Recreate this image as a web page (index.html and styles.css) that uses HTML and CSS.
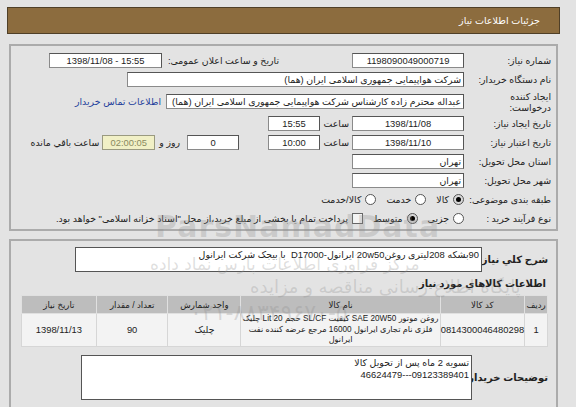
FILE: index.html
```html
<!DOCTYPE html>
<html lang="fa" dir="rtl">
<head>
<meta charset="utf-8">
<title>جزئیات اطلاعات نیاز</title>
<link rel="stylesheet" href="styles.css">
</head>
<body>
<div class="page">
  <div class="titlebar">جزئیات اطلاعات نیاز</div>

  <div class="panel p1">
    <div class="row">
      <div class="lbl">شماره نیاز:</div>
      <div class="box w112 ltr">1198090049000719</div>
      <div class="ann">تاریخ و ساعت اعلان عمومی:</div>
      <div class="box w113 ltr">1398/11/08 - 15:55</div>
    </div>
    <div class="row">
      <div class="lbl">نام دستگاه خریدار:</div>
      <div class="box w337 r">شرکت هواپیمایی جمهوری اسلامی ایران (هما)</div>
    </div>
    <div class="row tall">
      <div class="lbl">ایجاد کننده<br>درخواست:</div>
      <div class="box w298 r">عبداله محترم زاده کارشناس شرکت هواپیمایی جمهوری اسلامی ایران (هما)</div>
      <a class="link" href="#">اطلاعات تماس خریدار</a>
    </div>
    <div class="row">
      <div class="lbl">تاریخ ایجاد نیاز:</div>
      <div class="box w112 ltr">1398/11/08</div>
      <div class="txt hour">ساعت</div>
      <div class="box w52 ltr">15:55</div>
    </div>
    <div class="row">
      <div class="lbl">تاریخ اعتبار نیاز:</div>
      <div class="box w112 ltr">1398/11/10</div>
      <div class="txt hour">ساعت</div>
      <div class="box w52 ltr">10:00</div>
      <div class="box w52 ltr days">0</div>
      <div class="txt rooz">روز و</div>
      <div class="box remain ltr">02:00:05</div>
      <div class="txt left">ساعت باقي مانده</div>
    </div>
    <div class="row">
      <div class="lbl">استان محل تحویل:</div>
      <div class="box w112 r">تهران</div>
    </div>
    <div class="row">
      <div class="lbl">شهر محل تحویل:</div>
      <div class="box w112 r">تهران</div>
    </div>
    <div class="row">
      <div class="lbl">طبقه بندی موضوعی:</div>
      <div class="opts">
        <span class="radio on"></span><span class="opt">کالا</span>
        <span class="radio"></span><span class="opt">خدمت</span>
        <span class="radio"></span><span class="opt">کالا/خدمت</span>
      </div>
    </div>
    <div class="row">
      <div class="lbl">نوع فرآیند خرید :</div>
      <div class="opts">
        <span class="radio"></span><span class="opt">جزیی</span>
        <span class="radio on"></span><span class="opt">متوسط</span>
        <span class="check"></span><span class="opt">پرداخت تمام یا بخشی از مبلغ خرید،از محل "اسناد خزانه اسلامی" خواهد بود.</span>
      </div>
    </div>
  </div>

  <div class="panel p2">
    <div class="desc-row">
      <div class="blbl">شرح کلي نياز:</div>
      <div class="area sharh">90بشکه 208لیتری روغن20w50 ایرانول-D17000&nbsp; با بیجک شرکت ایرانول</div>
    </div>
    <div class="heading">اطلاعات کالاهاي مورد نياز</div>
    <table class="items">
      <thead>
        <tr>
          <th class="c1">ردیف</th>
          <th class="c2">کد کالا</th>
          <th class="c3">نام کالا</th>
          <th class="c4">واحد شمارش</th>
          <th class="c5">تعداد / مقدار</th>
          <th class="c6">تاریخ نیاز</th>
        </tr>
      </thead>
      <tbody>
        <tr>
          <td>1</td>
          <td>0814300046480298</td>
          <td class="name">روغن موتور SAE 20W50 کیفیت SL/CF حجم 20 Lit چلیک فلزی نام تجاری ایرانول 16000 مرجع عرضه کننده نفت ایرانول</td>
          <td>چلیک</td>
          <td>90</td>
          <td>1398/11/13</td>
        </tr>
      </tbody>
    </table>
    <div class="desc-row buyer">
      <div class="blbl">توضیحات خریدار:</div>
      <div class="area note">تسویه 2 ماه پس از تحویل کالا<br>09123389401---46624479</div>
    </div>
  </div>

  <div class="wm wm-latin">ParsNamadData</div>
  <div class="wm wm-fa1">مرکز فرآوری اطلاعات پارس نماد داده</div>
  <div class="wm wm-fa2">پایگاه اطلاع رسانی مناقصه و مزایده</div>
  <div class="wm wm-fa3">۰۲۱-۸۸۳۴۹۶۷۰-۵</div>
</div>
</body>
</html>
```

FILE: styles.css
```css
html, body {
  margin: 0;
  padding: 0;
}

body {
  background: #e3e3e3;
  font-family: "Liberation Sans", "DejaVu Sans", sans-serif;
  font-size: 9.4px;
  color: #222;
  overflow: hidden;
}

.page {
  position: relative;
  padding: 7px 16px 0 7px;
  direction: rtl;
}

.titlebar {
  height: 25px;
  background: #8c6c3e;
  border: 1px solid #4f3f27;
  color: #fff;
  display: flex;
  align-items: center;
  padding-right: 19px;
  font-size: 9.6px;
}

.panel {
  margin: 10px 2px 0 2px;
  border: 2px solid #ababab;
}

.p1 {
  padding: 5px 0 1px 0;
}

.row {
  display: flex;
  align-items: center;
  height: 19px;
}

.row.tall {
  height: 25px;
}

.lbl {
  flex: none;
  width: 87px;
  padding-right: 5px;
  line-height: 11px;
  white-space: nowrap;
}

.box {
  flex: none;
  box-sizing: border-box;
  height: 15px;
  line-height: 13px;
  background: #fff;
  border: 1px solid #8a8a8a;
  border-top-color: #555;
  border-right-color: #555;
  text-align: center;
  white-space: nowrap;
  overflow: hidden;
  color: #222;
}

.box.r {
  text-align: right;
  padding-right: 2px;
}

.ltr {
  direction: ltr;
}

.w112 { width: 112px; }
.w113 { width: 113px; margin-right: 3px; }
.w337 { width: 337px; }
.w298 { width: 298px; }
.w52 { width: 52px; margin-right: 3px; }

.ann {
  flex: none;
  width: 114px;
  margin-right: 73px;
  white-space: nowrap;
}

.txt {
  flex: none;
  white-space: nowrap;
}

.hour {
  width: 26px;
  margin-right: 3px;
}

.days {
  margin-right: 29px;
}

.rooz {
  margin-right: 7px;
}

.remain {
  width: 53px;
  margin-right: 4px;
  background: #f1f0c6;
  border-color: #9a9a80;
  color: #8a8a60;
}

.left {
  margin-right: 3px;
}

.link {
  margin-right: 5px;
  color: #243f9c;
  text-decoration: none;
  white-space: nowrap;
}

.opts {
  display: flex;
  align-items: center;
  white-space: nowrap;
}

.radio {
  flex: none;
  width: 11px;
  height: 11px;
  box-sizing: border-box;
  border: 1px solid #555;
  border-radius: 50%;
  background: #fff;
  margin-left: 4px;
  position: relative;
}

.radio.on {
  background: #d8d8d8;
}

.radio.on::after {
  content: "";
  position: absolute;
  left: 2px;
  top: 2px;
  width: 5px;
  height: 5px;
  border-radius: 50%;
  background: #000;
}

.check {
  flex: none;
  width: 11px;
  height: 11px;
  box-sizing: border-box;
  border: 1px solid #666;
  background: #f4f4f4;
  margin-left: 4px;
}

.opt {
  margin-left: 10px;
}

.p2 {
  margin-top: 8px;
  padding: 6px 0 40px 0;
}

.desc-row {
  display: flex;
  align-items: center;
}

.blbl {
  flex: none;
  width: 66px;
  padding-right: 8px;
  font-weight: bold;
  font-size: 10px;
  white-space: nowrap;
}

.area {
  box-sizing: border-box;
  background: #fff;
  border: 1px solid #555;
  padding: 1px 2px;
  line-height: 12px;
  text-align: right;
}

.sharh {
  width: 407px;
  height: 25px;
}

.heading {
  margin: 4px 10px 0 0;
  font-weight: bold;
  font-size: 10px;
  height: 16px;
  line-height: 16px;
}

.items {
  margin: 3px 8px 0 9px;
  width: 527px;
  border-collapse: collapse;
  background: #f3f3f3;
  border: 1px solid #cfcfcf;
}

.items th {
  background: #bdbdbd;
  height: 17px;
  font-weight: normal;
  font-size: 8.6px;
  color: #222;
  border: 1px solid #e0e0e0;
  padding: 0;
}

.items td {
  border: 1px solid #d6d6d6;
  text-align: center;
  height: 32px;
  padding: 0;
  line-height: 10.5px;
}

.items td.name {
  padding: 0 1px;
  font-size: 8.2px;
}

.c1 { width: 22px; }
.c2 { width: 77px; }
.c3 { width: 206px; }
.c4 { width: 74px; }
.c5 { width: 73px; }
.c6 { width: 75px; }

.buyer {
  margin-top: 8px;
}

.buyer .blbl {
  width: 76px;
}

.note {
  width: 391px;
  height: 45px;
}

.wm {
  position: absolute;
  pointer-events: none;
  white-space: nowrap;
  color: rgba(140, 140, 140, 0.28);
  font-family: "DejaVu Sans", sans-serif;
}

.wm-latin {
  left: 155px;
  top: 209px;
  direction: ltr;
  font-size: 30px;
  font-weight: bold;
  letter-spacing: 1px;
}

.wm-fa1 {
  left: 150px;
  top: 254px;
  font-size: 17px;
}

.wm-fa2 {
  left: 250px;
  top: 276px;
  font-size: 18px;
}

.wm-fa3 {
  left: 190px;
  top: 300px;
  font-size: 22px;
}
```
